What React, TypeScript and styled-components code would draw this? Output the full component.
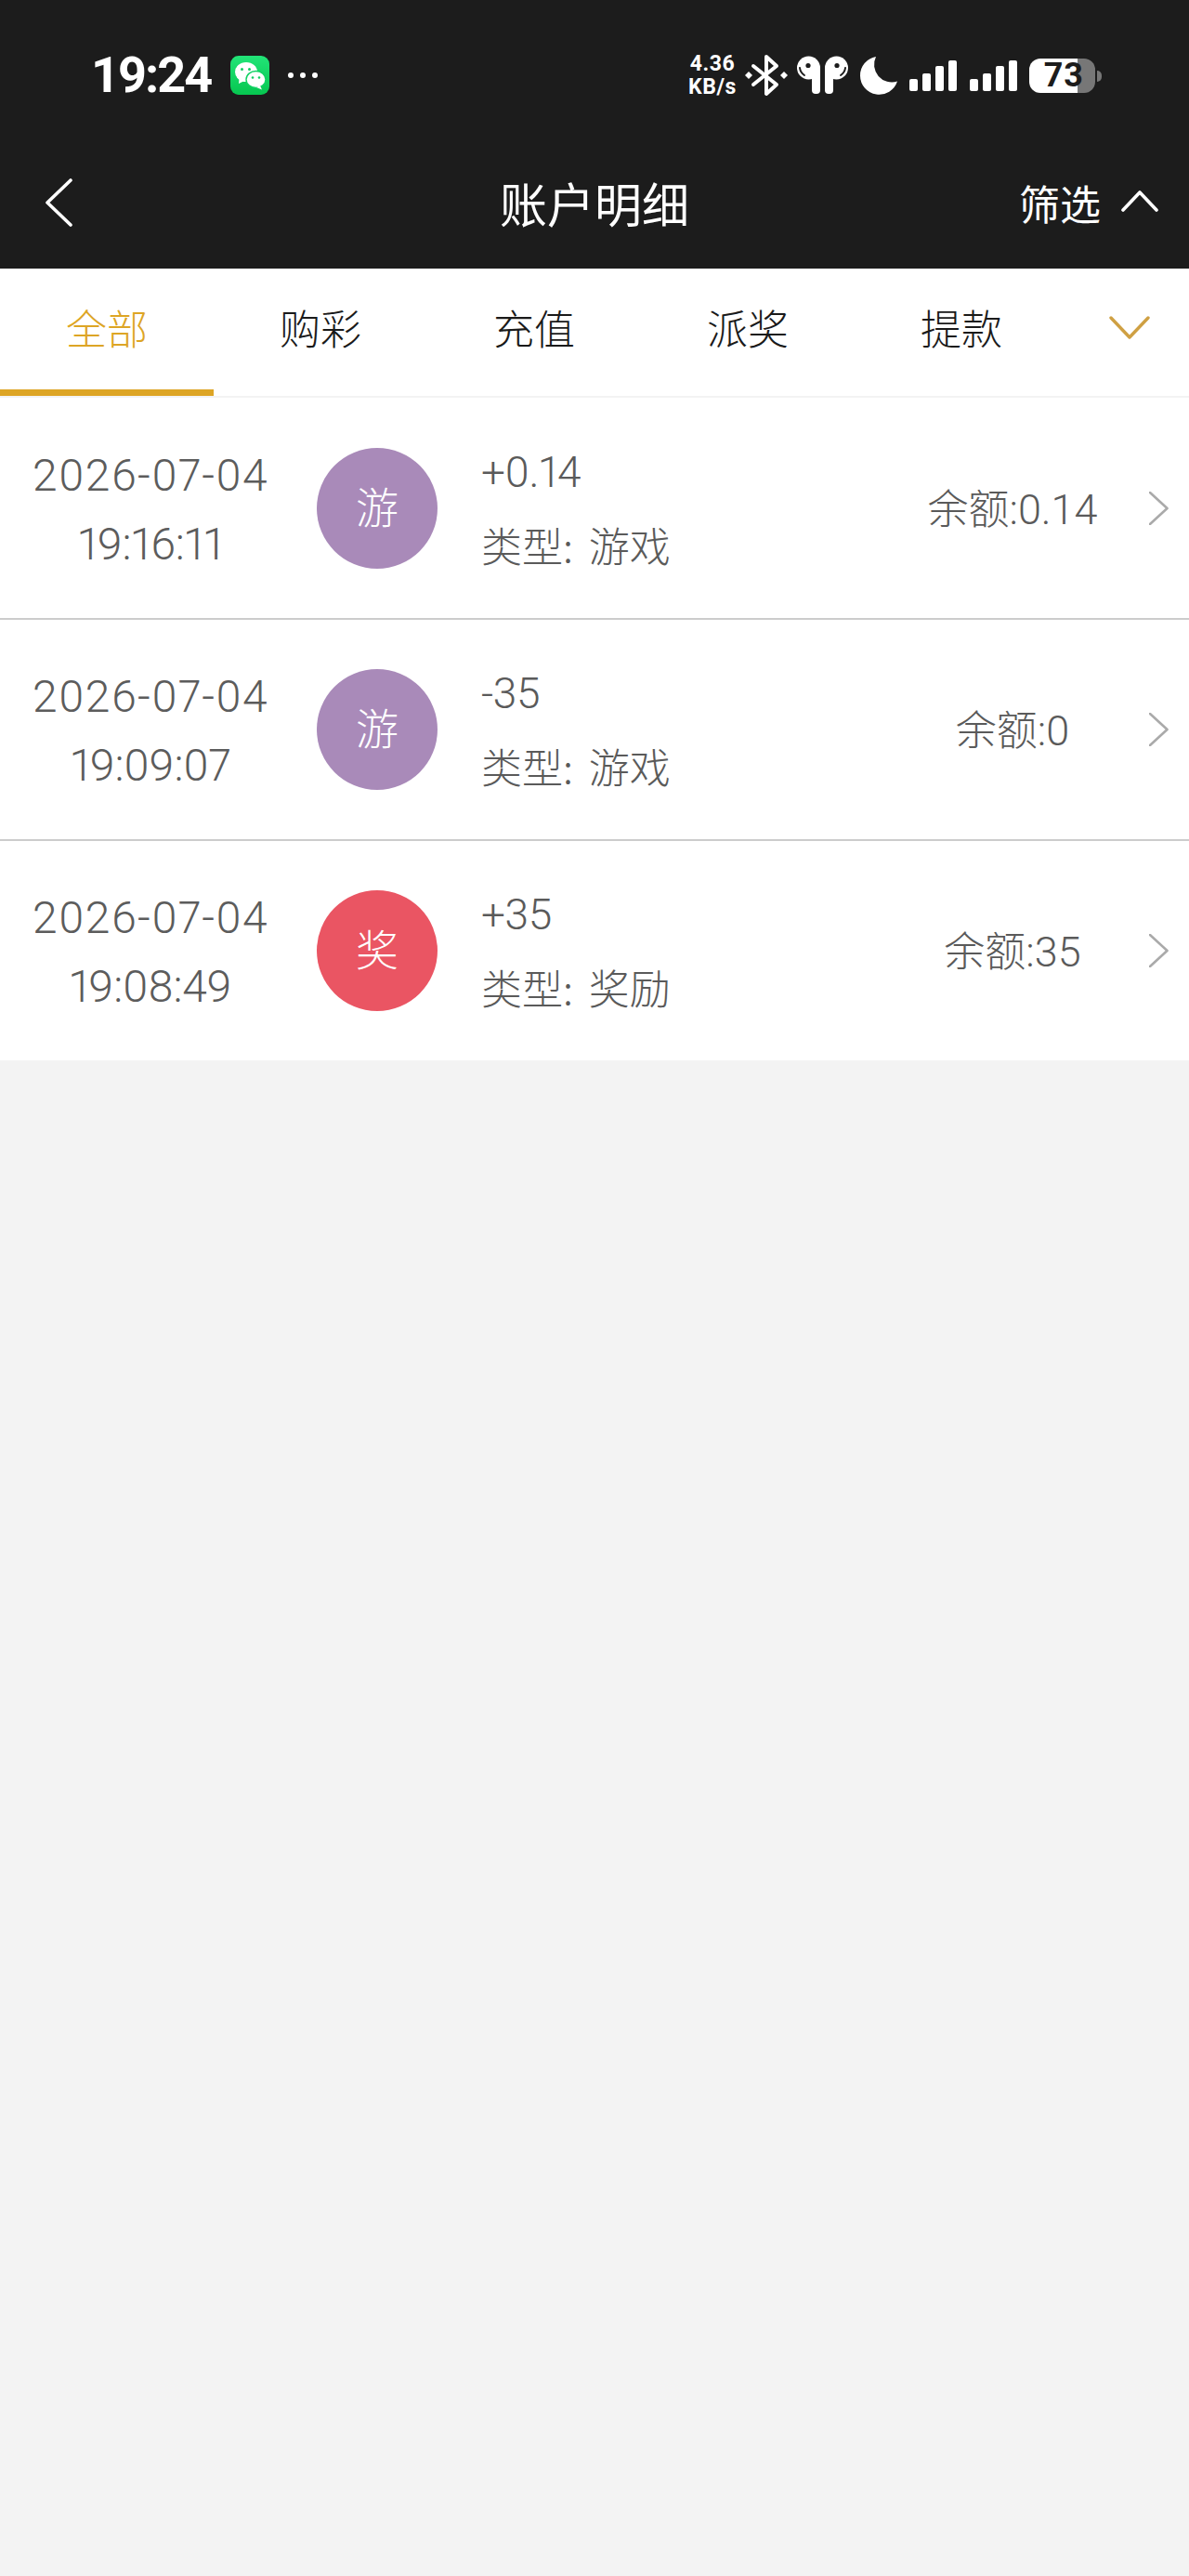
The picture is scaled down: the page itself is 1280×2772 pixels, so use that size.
import React from "react";
import styled, { createGlobalStyle } from "styled-components";

const tabs = ["全部", "购彩", "充值", "派奖", "提款"];

const records = [
  { date: "2026-07-04", time: "19:16:11", badge: "游", color: "#a98ab9", amount: "+0.14", type: "游戏", balance: "0.14" },
  { date: "2026-07-04", time: "19:09:07", badge: "游", color: "#a98ab9", amount: "-35", type: "游戏", balance: "0" },
  { date: "2026-07-04", time: "19:08:49", badge: "奖", color: "#ea5563", amount: "+35", type: "奖励", balance: "35" },
];

const App = () => {
  return (
    <Page>
      <GlobalStyle />
      <Header>
        <StatusBar>
          <Clock>19:24</Clock>
          <WeChat viewBox="0 0 42 42">
            <defs>
              <linearGradient id="wechatBg" x1="0" y1="0" x2="0" y2="1">
                <stop offset="0" stopColor="#22e477" />
                <stop offset="1" stopColor="#06c650" />
              </linearGradient>
            </defs>
            <rect width="42" height="42" rx="9" fill="url(#wechatBg)" />
            <ellipse cx="17" cy="17.5" rx="12" ry="10.5" fill="#fff" />
            <path d="M9.5 24 L9 30 L15 27 Z" fill="#fff" />
            <circle cx="12.5" cy="14.5" r="1.5" fill="#0fcf5f" />
            <circle cx="20.5" cy="14.5" r="1.5" fill="#0fcf5f" />
            <ellipse cx="27.5" cy="25.5" rx="10.5" ry="9" fill="#fff" stroke="#10d162" strokeWidth="1.4" />
            <path d="M32 32 L34 36.5 L28 34 Z" fill="#fff" />
            <circle cx="24" cy="23.5" r="1.3" fill="#0fcf5f" />
            <circle cx="31" cy="23.5" r="1.3" fill="#0fcf5f" />
          </WeChat>
          <Dots>
            <i />
            <i />
            <i />
          </Dots>
          <Indicators>
            <Speed>
              <span>4.36</span>
              <span>KB/s</span>
            </Speed>
            <Glyph $width={44} $height={46} $gap={10} viewBox="0 0 44 46">
              <path d="M8 13 L33 33 L22 43 V3 L33 13 L8 33" fill="none" stroke="#fff" strokeWidth="4" strokeLinejoin="round" strokeLinecap="round" />
              <path d="M3 19 L7 23 L3 27 L-1 23 Z M41 19 L45 23 L41 27 L37 23 Z" fill="#fff" />
            </Glyph>
            <Glyph $width={55} $height={40} $gap={11} viewBox="0 0 55 40">
              <circle cx="12.5" cy="12" r="12.5" fill="#fff" />
              <rect x="16" y="10" width="9" height="30" rx="4" fill="#fff" />
              <circle cx="12" cy="9.5" r="2.6" fill="#1c1c1c" />
              <path d="M3 12 Q3.5 17 8 20" fill="none" stroke="#1c1c1c" strokeWidth="2" strokeLinecap="round" />
              <circle cx="42.5" cy="12" r="12.5" fill="#fff" />
              <rect x="30" y="10" width="9" height="30" rx="4" fill="#fff" />
              <circle cx="43" cy="9.5" r="2.6" fill="#1c1c1c" />
              <path d="M52 12 Q51.5 17 47 20" fill="none" stroke="#1c1c1c" strokeWidth="2" strokeLinecap="round" />
            </Glyph>
            <Glyph $width={40} $height={41} $gap={13} viewBox="0 0 40 41">
              <path d="M17 0 A20.5 20.5 0 1 0 40 26.5 A19 19 0 0 1 17 0 Z" fill="#fff" />
            </Glyph>
            <SignalBars gap={13} />
            <SignalBars gap={14} />
            <Battery>73</Battery>
          </Indicators>
        </StatusBar>
        <NavBar>
          <BackIcon viewBox="0 0 29 52">
            <path d="M27 2 L2 26 L27 50" />
          </BackIcon>
          <Title>账户明细</Title>
          <FilterButton>
            筛选
            <UpIcon viewBox="0 0 40 24">
              <path d="M2 22 L20 3 L38 22" />
            </UpIcon>
          </FilterButton>
        </NavBar>
      </Header>
      <TabBar>
        {tabs.map((tab, i) => (
          <Tab key={tab} $active={i === 0}>
            {tab}
          </Tab>
        ))}
        <TabMore>
          <MoreIcon viewBox="0 0 44 25">
            <path d="M2 2 L22 23 L42 2" />
          </MoreIcon>
        </TabMore>
      </TabBar>
      <List>
        {records.map((r) => (
          <Row key={r.time}>
            <DateCol>
              <div>{r.date}</div>
              <TimeText>{r.time}</TimeText>
            </DateCol>
            <Badge $color={r.color}>{r.badge}</Badge>
            <Info>
              <Amount>{r.amount}</Amount>
              <TypeLine>类型: {r.type}</TypeLine>
            </Info>
            <Balance>
              <BalanceLabel>余额</BalanceLabel>:{r.balance}
            </Balance>
            <Arrow viewBox="0 0 21 36">
              <path d="M1 1 L19.5 18 L1 35" />
            </Arrow>
          </Row>
        ))}
      </List>
    </Page>
  );
};

const SignalBars = ({ gap }: { gap: number }) => (
  <Glyph $width={51} $height={33} $gap={gap} viewBox="0 0 51 33">
    <rect x="0" y="20" width="9" height="13" rx="2" fill="#fff" />
    <rect x="14" y="14" width="9" height="19" rx="2" fill="#fff" />
    <rect x="28" y="6" width="9" height="27" rx="2" fill="#fff" />
    <rect x="42" y="0" width="9" height="33" rx="2" fill="#fff" />
  </Glyph>
);

export default App;

const GlobalStyle = createGlobalStyle`
  html, body {
    margin: 0;
    padding: 0;
    background: #f3f3f3;
  }
  * {
    box-sizing: border-box;
  }
`;

const Page = styled.div`
  width: 1280px;
  min-height: 2772px;
  background: #f3f3f3;
  font-family: "Noto Sans CJK SC", sans-serif;
`;

const Header = styled.header`
  background: #1c1c1c;
  height: 289px;
`;

const StatusBar = styled.div`
  height: 149px;
  padding: 13px 95px 0 98px;
  display: flex;
  align-items: center;
`;

const Clock = styled.div`
  font-family: Roboto, sans-serif;
  font-weight: 700;
  font-size: 54px;
  line-height: 1;
  letter-spacing: -2px;
  color: #fff;
  width: 150px;
`;

const WeChat = styled.svg`
  width: 42px;
  height: 42px;
`;

const Dots = styled.div`
  display: flex;
  gap: 7px;
  margin-left: 20px;

  i {
    width: 6px;
    height: 6px;
    border-radius: 50%;
    background: #fff;
  }
`;

const Indicators = styled.div`
  margin-left: auto;
  display: flex;
  align-items: center;
`;

const Speed = styled.div`
  display: flex;
  flex-direction: column;
  align-items: center;
  width: 52px;
  font-family: Roboto, sans-serif;
  font-weight: 700;
  font-size: 23px;
  line-height: 25px;
  color: #fff;
  letter-spacing: 0.6px;
`;

const Glyph = styled.svg<{ $width: number; $height: number; $gap: number }>`
  width: ${(p) => p.$width}px;
  height: ${(p) => p.$height}px;
  margin-left: ${(p) => p.$gap}px;
  overflow: visible;
  flex: none;
`;

const Battery = styled.div`
  position: relative;
  width: 71px;
  height: 37px;
  margin-left: 13px;
  margin-right: 6px;
  border-radius: 12px;
  background: linear-gradient(90deg, #fff 52px, #777 52px);
  color: #1c1c1c;
  font-family: Roboto, sans-serif;
  font-weight: 700;
  font-size: 36px;
  line-height: 37px;
  text-align: right;
  padding-right: 12px;
  letter-spacing: 1px;

  &::after {
    content: "";
    position: absolute;
    right: -7px;
    top: 13px;
    width: 5px;
    height: 12px;
    border-radius: 0 5px 5px 0;
    background: #777;
  }
`;

const NavBar = styled.div`
  height: 140px;
  padding-bottom: 2px;
  display: grid;
  grid-template-columns: 1fr auto 1fr;
  align-items: center;
  color: #fff;
`;

const stroked = `
  fill: none;
  stroke-linecap: round;
  stroke-linejoin: round;
`;

const BackIcon = styled.svg`
  width: 29px;
  height: 52px;
  margin-left: 49px;

  path {
    ${stroked}
    stroke: #fff;
    stroke-width: 3.6;
  }
`;

const Title = styled.div`
  font-size: 51px;
  line-height: 1;
  font-weight: 400;
`;

const FilterButton = styled.div`
  justify-self: end;
  display: flex;
  align-items: center;
  gap: 22px;
  padding-right: 33px;
  font-size: 44px;
  line-height: 1;
  font-weight: 400;
`;

const UpIcon = styled.svg`
  width: 40px;
  height: 24px;
  margin-top: -4px;

  path {
    ${stroked}
    stroke: #fff;
    stroke-width: 3.6;
  }
`;

const TabBar = styled.nav`
  height: 139px;
  background: #fff;
  display: flex;
  border-bottom: 2px solid #f3f3f3;
`;

const Tab = styled.div<{ $active?: boolean }>`
  width: 230px;
  display: flex;
  align-items: center;
  justify-content: center;
  padding-bottom: 4px;
  font-size: 44px;
  font-weight: 300;
  color: ${(p) => (p.$active ? "#dda525" : "#1a1a1a")};
  border-bottom: 7px solid ${(p) => (p.$active ? "#dda525" : "transparent")};
`;

const TabMore = styled.div`
  flex: 1;
  display: flex;
  align-items: center;
  padding: 0 0 11px 44px;
`;

const MoreIcon = styled.svg`
  width: 44px;
  height: 25px;

  path {
    ${stroked}
    stroke: #cfa043;
    stroke-width: 3.4;
  }
`;

const List = styled.div`
  background: #fff;
  padding-top: 1px;
`;

const Row = styled.div`
  height: 238px;
  display: flex;
  align-items: center;
  border-bottom: 2px solid #ccc;

  &:last-child {
    border-bottom: none;
    height: 236px;
  }
`;

const DateCol = styled.div`
  width: 324px;
  margin-right: 17px;
  padding-top: 4px;
  text-align: center;
  font-family: Roboto, sans-serif;
  font-weight: 300;
  font-size: 48px;
  line-height: 74px;
  letter-spacing: 1.3px;
  font-variant-numeric: proportional-nums;
  color: #5c5c5c;
`;

const TimeText = styled.div`
  letter-spacing: -0.3px;
`;

const Badge = styled.div<{ $color: string }>`
  width: 130px;
  height: 130px;
  border-radius: 50%;
  flex: none;
  display: flex;
  align-items: center;
  justify-content: center;
  margin-right: 47px;
  padding-bottom: 8px;
  background: ${(p) => p.$color};
  color: #fff;
  font-size: 46px;
  font-weight: 300;
`;

const Info = styled.div`
  flex: 1;
  color: #5a5a5a;
`;

const Amount = styled.div`
  font-family: Roboto, "Noto Sans CJK SC", sans-serif;
  font-size: 46px;
  font-weight: 300;
  line-height: 60px;
  letter-spacing: -0.4px;
  font-variant-numeric: proportional-nums;
`;

const TypeLine = styled.div`
  margin-top: 18px;
  font-size: 44px;
  font-weight: 300;
  line-height: 60px;
  word-spacing: 7px;
`;

const Balance = styled.div`
  width: 280px;
  text-align: center;
  padding-bottom: 4px;
  font-family: Roboto, "Noto Sans CJK SC", sans-serif;
  font-size: 45px;
  font-weight: 300;
  color: #5a5a5a;
  margin-right: 7px;
`;

const BalanceLabel = styled.span`
  font-family: "Noto Sans CJK SC", sans-serif;
  font-size: 44px;
  font-weight: 300;
`;

const Arrow = styled.svg`
  width: 21px;
  height: 36px;
  margin-right: 22px;

  path {
    ${stroked}
    stroke: #aaa;
    stroke-width: 2.6;
  }
`;
